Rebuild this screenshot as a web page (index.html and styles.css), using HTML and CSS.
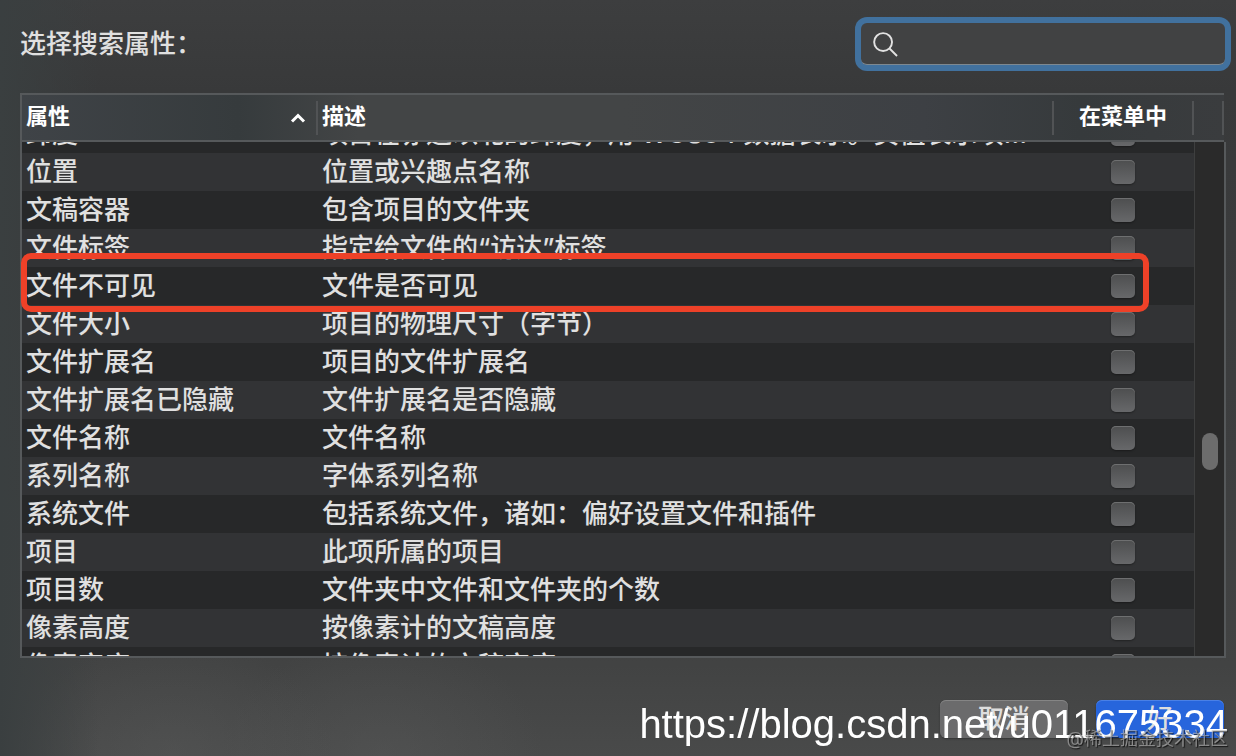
FILE: index.html
```html
<!DOCTYPE html>
<html lang="zh-CN">
<head>
  <meta charset="UTF-8"/>
  <meta name="viewport" content="width=device-width, initial-scale=1.0"/>
  <title>选择搜索属性</title>
  <link rel="stylesheet" href="styles.css">
</head>

<body>
<header class="toolbar">
  <label for="searchInput">选择搜索属性：</label>
  <div class="search">
    <svg viewBox="0 0 26 26" aria-hidden="true"><circle cx="10.5" cy="10.5" r="9.3"/><path d="M17.2 17.2 25 25"/></svg>
    <input id="searchInput" type="text">
  </div>
</header>

<main class="attributes">
  <!-- Column titles -->
  <table class="head">
    <thead>
      <tr>
        <th class="col-name"><div>属性 <svg viewBox="0 0 16 10" aria-label="升序"><path d="M2 8.5 8 2.5 14 8.5"/></svg></div></th>
        <th class="col-desc"><div>描述</div></th>
        <th class="col-menu"><div>在菜单中</div></th>
        <th class="col-bar"><div></div></th>
      </tr>
    </thead>
  </table>

  <!-- Rows -->
  <div class="list">
    <div class="scroll" id="scroll">
      <table class="rows">
        <tbody id="rows"></tbody>
      </table>
    </div>
    <div class="track"><div class="thumb"></div></div>
    <div class="highlight"></div>
  </div>
</main>

<footer>
  <button type="button">取消</button>
  <button type="button" class="primary">好</button>
</footer>

<div class="blog-url">https://blog.csdn.net/u011675334</div>
<div class="community">@稀土掘金技术社区</div>

<script>
const attributes = [
  ['纬度', '项目在赤道以北的纬度，用 WGS84 数据表示。负值表示项目在赤道以南'],
  ['位置', '位置或兴趣点名称'],
  ['文稿容器', '包含项目的文件夹'],
  ['文件标签', '指定给文件的“访达”标签'],
  ['文件不可见', '文件是否可见'],
  ['文件大小', '项目的物理尺寸（字节）'],
  ['文件扩展名', '项目的文件扩展名'],
  ['文件扩展名已隐藏', '文件扩展名是否隐藏'],
  ['文件名称', '文件名称'],
  ['系列名称', '字体系列名称'],
  ['系统文件', '包括系统文件，诸如：偏好设置文件和插件'],
  ['项目', '此项所属的项目'],
  ['项目数', '文件夹中文件和文件夹的个数'],
  ['像素高度', '按像素计的文稿高度'],
  ['像素宽度', '按像素计的文稿宽度']
];

document.getElementById('rows').innerHTML = attributes.map(([name, desc], i) => `
  <tr>
    <td class="col-name"><label for="attr${i}">${name}</label></td>
    <td class="col-desc">${desc}</td>
    <td class="col-menu"><input type="checkbox" id="attr${i}"></td>
  </tr>`).join('');

// first row is partly scrolled under the header
document.getElementById('scroll').scrollTop = 27;
</script>
</body>
</html>
```

FILE: styles.css
```css
:root{
  --line:#56595b;
  --row:#323335;
  --row-alt:#272829;
  --text:#e0e0e0;
}
*{margin:0;padding:0;box-sizing:border-box;font-family:Inter,"Noto Sans CJK SC",sans-serif}
body{
  display:flex;
  flex-direction:column;
  height:100vh;
  padding:23px 10px 18px 20px;
  overflow:hidden;
  color:var(--text);
  font-size:26px;
  font-weight:500;
  background:
    linear-gradient(90deg,#3a3f40 0,rgba(58,63,64,0) 8%),
    radial-gradient(160px 120px at 14% 100%,rgba(90,91,91,.4),transparent),
    radial-gradient(160px 120px at 31% 100%,rgba(90,91,91,.4),transparent),
    linear-gradient(180deg,#3d3e3f 0,#38393a 12%,#3d3e3f 60%,#424343 88%,#494a4a 100%);
}

/* Toolbar */
.toolbar{display:flex;align-items:center;justify-content:space-between;margin-bottom:28px}
.toolbar label{line-height:40px}
.search{
  display:flex;
  align-items:center;
  gap:10px;
  width:364px;
  height:42px;
  margin-right:1px;
  padding:2px 12px 0;
  border-radius:6px;
  border-bottom:1px solid #7d8890;
  background:#414243;
  box-shadow:0 0 0 6px #41719e;
}
.search svg{width:25px;height:25px;flex:none;fill:none;stroke:#e2e2e2;stroke-width:2}
.search input{flex:1;min-width:0;border:none;outline:none;background:none;color:var(--text);font-size:22px}

/* Table */
.attributes{flex:1;display:flex;flex-direction:column;min-height:0}
table{width:100%;table-layout:fixed;border-collapse:collapse}
.col-name{width:296px}
.col-menu{width:140px}
.col-bar{width:30px}
.head{
  border-collapse:separate;
  border-spacing:0;
  width:calc(100% - 2px);
  border:solid var(--line);
  border-width:2px 0 2px 2px;
  background:linear-gradient(90deg,#3f4347 0,#363b3d 18%,#434546 28%,#434546 50%,#3d4044 75%,#363a3c 88%,#3a3c3e 100%);
}
.head th{height:45px;color:#fff;font-size:22px;font-weight:700;text-align:left}
.head th div{display:flex;align-items:center;justify-content:space-between;height:34px;padding:0 4px 4px;border-right:2px solid #515355;line-height:30px}
.head .col-name div{padding-right:10px}
.head .col-menu div{justify-content:center}
.head svg{width:16px;height:10px;margin-top:4px;fill:none;stroke:#fff;stroke-width:3}

.list{position:relative;flex:1;display:flex;min-height:0;border:solid var(--line);border-width:0 2px 2px;background:var(--row-alt)}
.scroll{flex:1;overflow:hidden}
.rows tr{background:var(--row-alt)}
.rows tr:nth-child(even){background:var(--row)}
.rows td{height:38px;padding:0 4px;line-height:38px;white-space:nowrap;overflow:hidden;text-overflow:ellipsis}
.rows .col-desc{padding-right:12px}
.rows .col-menu{padding-right:6px}
.rows input{
  appearance:none;
  display:block;
  width:24px;
  height:24px;
  margin:0 auto;
  border-radius:5px;
  background:linear-gradient(#4d4e4f,#67686a);
  box-shadow:inset 0 1px 0 #6e6f70,0 1px 2px rgba(0,0,0,.35);
}
.track{width:30px;border-left:1px solid #3e3f3f;background:#2a2a2a}
.thumb{width:16px;height:37px;margin:291px auto 0;border-radius:8px;background:#6c6c6c}

/* Marker round the invisible-file row */
.highlight{position:absolute;top:111px;left:-1px;right:75px;height:59px;border:6px solid #ee4128;border-radius:10px}

/* Footer buttons */
footer{display:flex;justify-content:flex-end;gap:28px;margin-top:42px;padding-right:2px}
footer button{
  width:128px;
  height:38px;
  border:none;
  border-radius:6px;
  background:#6b6b6c;
  box-shadow:inset 0 1px 0 #858585,0 1px 2px rgba(0,0,0,.3);
  color:#dedede;
  font-size:26px;
  font-weight:500;
  line-height:38px;
}
footer .primary{background:#2765dc;box-shadow:inset 0 1px 0 #4a80e6,0 1px 2px rgba(0,0,0,.3)}

/* Watermarks */
.blog-url,.community{position:fixed;right:8px;white-space:nowrap;pointer-events:none;font-weight:400}
.blog-url{bottom:8px;color:#fff;font-family:"Liberation Sans",Arial,sans-serif;font-size:40px;line-height:48px}
.community{bottom:4px;color:rgba(190,190,190,.6);font-size:18px;line-height:26px;text-shadow:1px 1px 1px rgba(0,0,0,.7)}
```
